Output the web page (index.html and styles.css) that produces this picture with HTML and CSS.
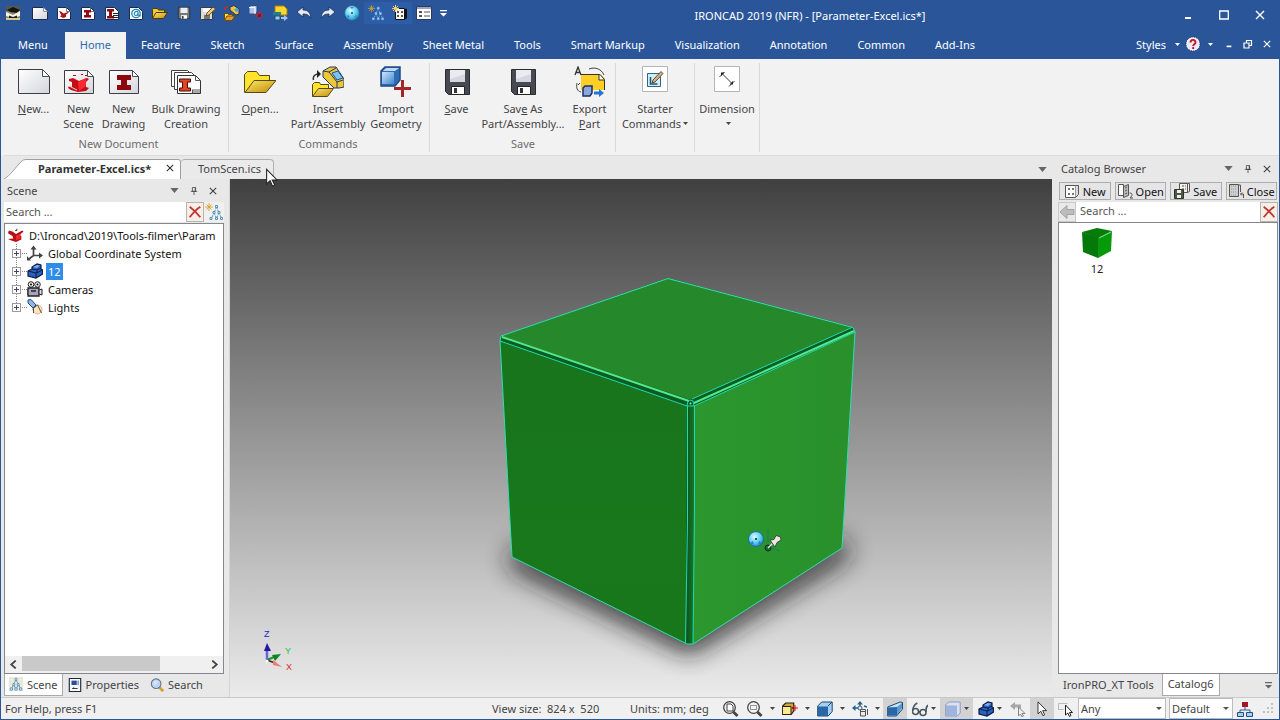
FILE: index.html
```html
<!DOCTYPE html>
<html lang="en">
<head>
<meta charset="utf-8">
<title>IRONCAD 2019 (NFR) - [Parameter-Excel.ics*]</title>
<link rel="stylesheet" href="styles.css">
</head>
<body>
<svg class="defs" aria-hidden="true">
  <defs>
    <linearGradient id="gPage" x1="0" y1="0" x2="1" y2="1"><stop offset="0" stop-color="#fff"/><stop offset="1" stop-color="#d4d5dc"/></linearGradient>
    <linearGradient id="gGold" x1="0" y1="0" x2="1" y2="1"><stop offset="0" stop-color="#ffe95a"/><stop offset="1" stop-color="#c08a1a"/></linearGradient>
    <linearGradient id="gBlue" x1="0" y1="0" x2="1" y2="1"><stop offset="0" stop-color="#cfe6fb"/><stop offset="1" stop-color="#3f86cf"/></linearGradient>
    <radialGradient id="gBall" cx=".4" cy=".35" r=".7"><stop offset="0" stop-color="#d9fbff"/><stop offset=".6" stop-color="#55cbee"/><stop offset="1" stop-color="#2887bd"/></radialGradient>
  </defs>
  <symbol id="i-app" viewBox="0 0 16 16"><rect x="1" y="1" width="14" height="14" fill="#8b8878"/><path d="M1 1h14v5H1z" fill="#55574e"/><path d="M2 5l6-3 7 3-3 3-7-1z" fill="#16160f"/><path d="M1 7l7 3 7-4v5l-7 2-7-2z" fill="#f6f4e6"/><path d="M4 10.500l4 1.500 4-1.500V13H4z" fill="#222"/><path d="M1 13h14v2H1z" fill="#d8c98c"/></symbol>
  <symbol id="i-page" viewBox="0 0 16 16"><path d="M.5 2.500h11l4 4v8h-15z" fill="url(#gPage)" stroke="#1b2b50"/><path d="M11.500 2.500v4h4" fill="#fff" stroke="#8a93a8"/></symbol>
  <symbol id="i-page-scene" viewBox="0 0 16 16"><path d="M1.500 2.500h9l4 4v8h-13z" fill="#fff" stroke="#1b2b50"/><path d="M10.500 2.500v4h4" fill="none" stroke="#777"/><path d="M3 6l2 .5 2.500 2L12 7l1 .5-3 2V12l-3 1-3.500-2 2-.5z" fill="#b01017"/></symbol>
  <symbol id="i-page-draw" viewBox="0 0 16 16"><path d="M1.500 2.500h9l4 4v8h-13z" fill="#fff" stroke="#1b2b50"/><path d="M10.500 2.500v4h4" fill="none" stroke="#777"/><path d="M4 5h7v2.500H9v2.500h2v2.500H4V10h2V7.500H4z" fill="#8e0d14"/></symbol>
  <symbol id="i-page-bulk" viewBox="0 0 16 16"><path d="M1.500 2.500h9l4 4v8h-13z" fill="#fff" stroke="#1b2b50"/><path d="M3 4h7v2.500H8v4.500h2v2.500H3V11h2V6.500H3z" fill="#8e0d14"/><path d="M9 8.500h6M9 10.500h6M9 12.500h6" stroke="#222"/></symbol>
  <symbol id="i-page-at" viewBox="0 0 16 16"><path d="M1.500 2.500h9l4 4v8h-13z" fill="#fff" stroke="#1b2b50"/><circle cx="8" cy="8.500" r="4.200" fill="none" stroke="#2488b4" stroke-width="1.300"/><path d="M10 6.500c-4-1-5 4-2 4 2 0 2-3 2-4v3.500l3 1" fill="none" stroke="#2488b4" stroke-width="1.200"/></symbol>
  <symbol id="i-folder" viewBox="0 0 16 16"><path d="M.5 13.500V4.500l1-1h4l1 1.500h6v2" fill="#f5c93a" stroke="#4d3c08"/><path d="M.5 13.500l3.500-6h11.500l-4 6z" fill="url(#gGold)" stroke="#4d3c08"/></symbol>
  <symbol id="i-floppy" viewBox="0 0 16 16"><path d="M1.500 1.500h13v13h-12l-1-1z" fill="#75777c" stroke="#2d2f35"/><path d="M4 2h8v6H4z" fill="#eceef2"/><path d="M4.500 10.500h7v4h-7z" fill="#fff"/><path d="M5.500 11.500h2v3h-2z" fill="#333"/></symbol>
  <symbol id="i-floppy-pen" viewBox="0 0 16 16"><path d="M.5 2.500h12v12H1.500l-1-1z" fill="#d8dade" stroke="#3a3c42"/><path d="M3 3h7v4H3z" fill="#fff"/><path d="M4 10h6v4H4z" fill="#777"/><path d="M6 11l1-3 6-6 2.500 2-6.500 6z" fill="#f4c77a" stroke="#4f3a16" stroke-width=".8"/></symbol>
  <symbol id="i-insert" viewBox="0 0 16 16"><path d="M6 2l4-1.500 5 3.500v5l-3 1-6-5z" fill="#f0c53c" stroke="#26375a"/><path d="M10 4l3-1 2 3-3 1z" fill="#4da0e8"/><path d="M.5 15.500V8.500h3l1 1h4v2" fill="#ffe24a" stroke="#6b4c0a"/><path d="M.5 15.500l2.500-4.500h8l-3 4.500z" fill="#eb9a32" stroke="#6b4c0a"/><path d="M1 5c0-2 1-3 3-3" fill="none" stroke="#d22" stroke-width="1.500"/></symbol>
  <symbol id="i-import" viewBox="0 0 16 16"><path d="M1 2l2-1.500h6V7L7.500 9H1z" fill="#a9c5ec" stroke="#2f4c86"/><path d="M1 2.500h6V9" fill="none" stroke="#fff"/><path d="M11.500 6v9M7 10.500h9" stroke="#d21d2a" stroke-width="1.800" stroke-dasharray="3 1"/><path d="M10 9h3v3h-3z" fill="#8d1020"/></symbol>
  <symbol id="i-export" viewBox="0 0 16 16"><path d="M3 1h9l3 3v6H3z" fill="#ffd62b" stroke="#a87f11"/><path d="M1 7h8v3H1z" fill="#1c7e99"/><path d="M3 11h5v4H3z" fill="#9fd0e0" stroke="#214c77"/><path d="M9 12h3v-2l4 3-4 3v-2H9z" fill="#a7c3ea"/></symbol>
  <symbol id="i-undo" viewBox="0 0 16 16"><path d="M7 2L1 7l6 5V9c4 0 6 1 7.500 4.500C15 8 12 5 7 5z" fill="#e7e9ef" stroke="#15305f" stroke-width=".8"/></symbol>
  <symbol id="i-redo" viewBox="0 0 16 16"><path d="M9 2l6 5-6 5V9c-4 0-6 1-7.500 4.500C1 8 4 5 9 5z" fill="#e7e9ef" stroke="#15305f" stroke-width=".8"/></symbol>
  <symbol id="i-ball" viewBox="0 0 16 16"><circle cx="8" cy="8" r="7.400" fill="url(#gBall)" stroke="#2b5f90" stroke-width=".8"/><path d="M8 7v2M7 8h2" stroke="#13567f"/><path d="M2.500 11l2-1 1 2-1 1.500M13.500 11l-2-1-1 2 1 1.500M6 2h4L8 4z" fill="#2f8fd3"/></symbol>
  <symbol id="i-tree" viewBox="0 0 18 18"><path d="M11.500 4l-2.500 6-2.500 5M11.500 4l2.500 6 2.500 5M9 10l2.500 5M14 10l-2.500 5" stroke="currentColor" fill="none" stroke-dasharray="2 1"/><g fill="#e6f0f4" stroke="currentColor"><path d="M10.500 2.500h2v2h-2zM8 8.500h2v2H8zM13 8.500h2v2h-2zM5 14.500h2v2H5zM10.500 14.500h2v2h-2zM15.500 14.500h2v2h-2z"/></g><path d="M4 0v8M0 4h8M1.500 1.500l5 5M6.500 1.500l-5 5" stroke="#d8a32c" stroke-width=".9"/></symbol>
  <symbol id="i-tree-plain" viewBox="0 0 16 16"><path d="M0 0h16v16H0z" fill="#e9e9dc"/><path d="M8 3L2.500 14M8 3l5.500 11M5.500 9l2.500 5M10.500 9L8 14" stroke="#5d97bd" fill="none"/><path d="M7 1.500h2v2.500H7zM4.500 7.500h2v2.500h-2zM9.500 7.500h2v2.500h-2zM1.500 12.500h2.500v2.500H1.500zM6.750 12.500h2.500v2.500h-2.500zM12 12.500h2.500v2.500H12z" fill="#fff" stroke="#5590b6"/></symbol>
  <symbol id="i-cat-new" viewBox="0 0 16 16"><path d="M3.500 3.500h9v11h-9z" fill="#f6f6f6" stroke="#111"/><path d="M12 4h3v9l-3 2z" fill="#111"/><path d="M5 6h2v2H5zM9 6h2v2H9zM5 10h2v2H5zM9 10h2v2H9z" fill="#555"/><path d="M3.500 0v7M0 3.500h7M1 1l5 5M6 1L1 6" stroke="#f3cf63"/></symbol>
  <symbol id="i-list" viewBox="0 0 16 16"><path d="M.5 1.500h15v13H.5z" fill="#fff" stroke="#2a3c66"/><path d="M1 2h14v2H1z" fill="#9aa4bb"/><path d="M3 6h3v2H3zM3 10h3v2H3z" fill="#555"/><path d="M8 7h6M8 11h6" stroke="#555"/></symbol>
  <symbol id="b-page" viewBox="0 0 32 32"><path d="M.5 3.500h24l7 7v17H.5z" fill="url(#gPage)" stroke="#3c3e44"/><path d="M24.500 3.500v7h7z" fill="#fff" stroke="#4a4c52"/></symbol>
  <symbol id="b-scene" viewBox="0 0 32 32"><path d="M1.500 4.500h23l6 6v17h-29z" fill="url(#gPage)" stroke="#3c3e44"/><path d="M24.500 4.500v6h6z" fill="#fff" stroke="#4a4c52"/><path d="M6 13l4-1 6 3 8-3 2 1-3 3v5l3 1-3 3-8 1-7-2-3-2 1-2 3 1v-5l-3-1z" fill="#c60d16"/><path d="M15 16l8-4v8l-7 5z" fill="#fa2a2e"/><path d="M10 9.500h3M18 8.500h2M22 9.500h2" stroke="#b20d15"/><path d="M6 20l8 4" stroke="#fff" stroke-width=".8"/></symbol>
  <symbol id="b-draw" viewBox="0 0 32 32"><path d="M1.500 4.500h23l6 6v17h-29z" fill="url(#gPage)" stroke="#3c3e44"/><path d="M24.500 4.500v6h6z" fill="#fff" stroke="#4a4c52"/><path d="M9 9h14v5h-4v5h4v5H9v-5h4v-5H9z" fill="#8c0710"/></symbol>
  <symbol id="b-bulk" viewBox="0 0 32 32"><path d="M1.500 4.500h16l4 4v12h-20z" fill="#fff" stroke="#444"/><path d="M4.500 6.500h17l4 4v13h-21z" fill="#fff" stroke="#444"/><path d="M7.500 9.500h18l5 5v13h-23z" fill="#fff" stroke="#333"/><path d="M25.500 9.500v5h5M23 24h7M23 26h7M22.500 23.500v4" fill="none" stroke="#555"/><path d="M9.500 13h11v3h-3v6h3v3h-11v-3h3v-6h-3z" fill="#e8431f" stroke="#3c0e07"/></symbol>
  <symbol id="b-open" viewBox="0 0 32 32"><path d="M.5 26.500v-18l3-3h9l3 4h10v6" fill="#ffe32e" stroke="#544a12"/><path d="M1 26.500l9-12h22l-10 12z" fill="url(#gGold)" stroke="#544a12"/></symbol>
  <symbol id="b-insert" viewBox="0 0 32 32"><path d="M11 5l7-4h6l8 12v8l-5 1h-5L11 11z" fill="#ecc838" stroke="#26375a"/><path d="M11 5l6 1 8 10v6M17 6l7-4M25 16l6-2" fill="none" stroke="#26375a"/><path d="M20 7l6-2 5 7-6 2z" fill="#79c3f5" stroke="#1c54a3"/><path d="M.5 30.500V18.500l2-2h5l1 2h8v4" fill="#ffe32e" stroke="#544a12"/><path d="M.5 30.500l6-8h15l-6 8z" fill="url(#gGold)" stroke="#544a12"/><path d="M1.500 14c-1-4 2-6 5-6" fill="none" stroke="#333" stroke-width="1.500"/><path d="M5 4l4 4-4 4z" fill="#222"/></symbol>
  <symbol id="b-import" viewBox="0 0 32 32"><path d="M1 5l4-4h15v13l-5 6H1z" fill="#2f6cb6" stroke="#224a83" stroke-width="1.500"/><path d="M2 6h12v12H2z" fill="url(#gBlue)"/><path d="M6 2h13l-4 3H3z" fill="#bcdcf5"/><path d="M22.500 14v17M14 22.500h17" stroke="#a3262b" stroke-width="3"/></symbol>
  <symbol id="b-floppy" viewBox="0 0 32 32"><path d="M4.500 3.500h24v25H7.500l-3-3z" fill="#484a51" stroke="#292b31"/><path d="M9 4h15v12H9z" fill="#e9ebf0"/><path d="M9 13l15-5v8H9z" fill="#d4d7df"/><path d="M10.500 20.500h13v8h-13z" fill="#fff" stroke="#222"/><path d="M13 22h3v5h-3z" fill="#333"/></symbol>
  <symbol id="b-export" viewBox="0 0 32 32"><path d="M7 8h19l5 5v11H7z" fill="#ffcf25"/><path d="M7 8.500h19l4.500 5V24" fill="none" stroke="#333"/><path d="M25 8.500v5.500h5" fill="#fff" stroke="#333"/><path d="M1 9l3-8 3 8M2 6.500h4" fill="none" stroke="#333" stroke-width="1.300"/><path d="M15 3c5-2 12-1 15 6M3 17c-1 5 0 8 4 9M6 17l-2 2" fill="none" stroke="#444"/><path d="M9 22l2-2h7v7l-2 3H9z" fill="#8ca8d8" stroke="#1c2f66" stroke-width="1.500"/><path d="M20 25.500h5v-2.500l5 4-5 4v-2.500h-5z" fill="#2175d6"/></symbol>
  <symbol id="b-starter" viewBox="0 0 26 26"><path d="M.5.5h25v25H.5z" fill="#fff" stroke="#b4b4b4"/><path d="M5.500 7.500h13v13h-13z" fill="#d3edf3" stroke="#2a6684"/><path d="M8.500 11v7h7" fill="none" stroke="#1c5678" stroke-width="1.500"/><path d="M10 17l1-3 8-8.500 2 2-8 8.500z" fill="#d2b48a" stroke="#5a4a38"/></symbol>
  <symbol id="b-dim" viewBox="0 0 26 26"><path d="M.5.500h25v25H.5z" fill="#fff" stroke="#b4b4b4"/><path d="M8 7.500l10 10M5.500 11l5-5M15 20.500l5.500-5.500" stroke="#333" fill="none"/><path d="M7 6.500h3.500L7 10zM19 18.500h-3.500L19 15z" fill="#222"/></symbol>
  <symbol id="i-help" viewBox="0 0 16 16"><circle cx="8" cy="8" r="7" fill="#fff" stroke="#1b2a60" stroke-dasharray="1 1"/><circle cx="8" cy="8" r="6" fill="#eceafa"/><path d="M5.500 6.500c0-3.500 5-3.500 5 0 0 1.800-2.300 1.700-2.300 3.500M8.200 11v2" fill="none" stroke="#c81621" stroke-width="1.900"/></symbol>
  <symbol id="i-x" viewBox="0 0 10 10"><path d="M1 1l8 8M9 1L1 9" stroke="currentColor" stroke-width="1.400" fill="none"/></symbol>
  <symbol id="i-min" viewBox="0 0 10 10"><path d="M2 8h6" stroke="currentColor" stroke-width="2"/></symbol>
  <symbol id="i-max" viewBox="0 0 10 10"><path d="M.7 1h8.600v8H.7z" fill="none" stroke="currentColor" stroke-width="1.300"/></symbol>
  <symbol id="i-restore" viewBox="0 0 10 10"><path d="M3.500 4V1.500h5v5H6" fill="none" stroke="currentColor" stroke-width="1.200"/><path d="M1 4h5v5H1z" fill="none" stroke="currentColor" stroke-width="1.200"/></symbol>
  <symbol id="i-pin" viewBox="0 0 10 10"><path d="M3 .5h4v5H3zM1 5.500h8M5 6v4M6.500.5v5" fill="none" stroke="currentColor"/></symbol>
  <symbol id="i-caret" viewBox="0 0 10 6"><path d="M0 0h10L5 6z" fill="currentColor"/></symbol>
  <symbol id="i-caretbar" viewBox="0 0 8 8"><path d="M0 0h8v1.500H0zM0 3.500h8L4 7.500z" fill="currentColor"/></symbol>
  <symbol id="i-redx" viewBox="0 0 18 18"><path d="M3 3c4 3 9 8 12 12M15 3C10 6 6 11 3 15" stroke="#c3352f" stroke-width="2" fill="none"/></symbol>
  <symbol id="i-scene-red" viewBox="0 0 18 16"><path d="M1 3l4 1 4 3 7-4 1.500 1-4.500 4 2 1v4l-6 3-6-2-3-1.500 6-.5-1-3-5-3z" fill="#b70d14"/><path d="M9 8.500l5-1.500v5l-5 2z" fill="#f2262b"/><path d="M8 3h2V1" stroke="#222" fill="none"/></symbol>
  <symbol id="i-axes" viewBox="0 0 16 16"><path d="M6.500 10.500V2M6.500 10.500H14M6.500 10.500L2 14" stroke="#444" stroke-width="1.700" fill="none"/><path d="M3.500 4.500l3-4 3 4zM12 7.500l4 3-4 3zM0 11v4.500h4z" fill="#444"/></symbol>
  <symbol id="i-bluepart" viewBox="0 0 16 16"><path d="M1 8l4-2V4l5-3 4 1v4l1.500 1v4L9 15l-8-2z" fill="#2a61c0" stroke="#0c1b46" stroke-width="1.200"/><path d="M5 6l5 1 4-2M10 7v3l5-3M1 8l8 2v5M9 10l2-1" fill="none" stroke="#0c1b46"/><path d="M6 4l4-2 3 .5L10 5z" fill="#7fb0ee"/></symbol>
  <symbol id="i-camera" viewBox="0 0 16 16"><g fill="#eee" stroke="#222"><circle cx="4" cy="3.500" r="2.800"/><circle cx="10.500" cy="3.500" r="2.800"/></g><circle cx="4" cy="3.500" r="1"/><circle cx="10.500" cy="3.500" r="1"/><path d="M1 7h11v8H1z" fill="#a9a4bd" stroke="#222" stroke-width="1.300"/><path d="M12 9l3-1v6l-3-1zM0 8v6" fill="#ddd" stroke="#222"/><path d="M4 9h5v2H4z" fill="#444"/></symbol>
  <symbol id="i-light" viewBox="0 0 16 16"><circle cx="10.500" cy="10.500" r="4.500" fill="#fde5bd" stroke="#e2b37b"/><path d="M1 1l3-.5 5 5.500-3 3-5-5z" fill="#8eb7e6" stroke="#234b82"/><path d="M5.500 10l5-4 4 8M6.500 8v6" fill="none" stroke="#574d55"/></symbol>
  <symbol id="i-props" viewBox="0 0 16 16"><path d="M1.500.5h13v15h-13z" fill="#f7f8fc" stroke="#23293f" stroke-width="1.300"/><path d="M4 3h6v5H4z" fill="#2d4f9a"/><path d="M11.500 3v5" stroke="#2d4f9a"/><path d="M5 12h6M5 12l2-1" stroke="#222" fill="none"/></symbol>
  <symbol id="i-search" viewBox="0 0 16 16"><path d="M10 10l5 5" stroke="#d7a02f" stroke-width="3.200"/><circle cx="7" cy="6.500" r="5.500" fill="#b8d6f4" stroke="#6a7485" stroke-width="1.300"/><path d="M4 6l3-3M5 8l4-4" stroke="#fff"/></symbol>
  <symbol id="c-new" viewBox="0 0 16 16"><path d="M1.500 2.500h10v12h-10z" fill="#fbfbf7" stroke="#555"/><path d="M11.500 2.500h3v9l-3 3" fill="#ddd" stroke="#555"/><path d="M4 5h2v2H4zM8 5h2v2H8zM4 10h2v2H4zM8 10h2v2H8z" fill="#777"/></symbol>
  <symbol id="c-open" viewBox="0 0 16 16"><path d="M1.500 1.500h5v11h-5z" fill="#fbfbf7" stroke="#555"/><path d="M6.500 3.500l5-2v11l-5 2z" fill="#bbb" stroke="#555"/><path d="M8 5l2-1M8 8l2-1M8 11l2-1" stroke="#555"/><path d="M12.500 10c3.500-.5 3 3 .5 5h3" fill="none" stroke="#555"/></symbol>
  <symbol id="c-save" viewBox="0 0 16 16"><path d="M5.500.5h8v9h-8zM13.500.5h2v8l-2 1" fill="#f1f1ea" stroke="#555"/><path d="M8 3h2M11 3h1M8 6h2M11 6h1" stroke="#555"/><path d="M.5 6.500h9v9h-9z" fill="#4e5648" stroke="#2f3529"/><path d="M3 7h4v3H3zM3 12h4v3H3z" fill="#f2f2ec"/></symbol>
  <symbol id="c-close" viewBox="0 0 16 16"><path d="M1.500 1.500h9v12h-9z" fill="#cfcfcf" stroke="#555"/><path d="M3 3h6M3 6h6M3 9h6M3 12h6" stroke="#999" stroke-dasharray="1 1"/><path d="M10.500 2h2v7M15.500 15v-4h-3l1.500-1.500M12.500 11l1.500 1.500" fill="none" stroke="#555"/></symbol>
  <symbol id="i-back" viewBox="0 0 16 16"><path d="M8 1.500v4h7v5H8v4L1 8z" fill="#bdbdbd" stroke="#a3a3a3"/></symbol>
  <symbol id="i-cube" viewBox="0 0 32 32"><path d="M1 5L16 1l15 3-13 8z" fill="#087b0b"/><path d="M1 5l17 6-1 20L2 25z" fill="#04780a"/><path d="M17 11l14-7-1 20-13 7z" fill="#069a0b"/><path d="M18 11l12-6" stroke="#79d77b" stroke-width="1.200"/></symbol>
  <symbol id="s-zoompage" viewBox="0 0 16 16"><circle cx="6.500" cy="6.500" r="5.800" fill="#f4f4f4" stroke="#444" stroke-width="1.300"/><path d="M4 3h4l2 2v5H4z" fill="#fff" stroke="#444"/><path d="M10.500 11l4 4" stroke="#444" stroke-width="2.800"/></symbol>
  <symbol id="s-zoomwin" viewBox="0 0 16 16"><circle cx="6.500" cy="6.500" r="5.800" fill="#f4f4f4" stroke="#444" stroke-width="1.300"/><path d="M3.500 4.500h6v4h-6z" fill="none" stroke="#333" stroke-dasharray="1 1"/><path d="M10.500 11l4 4" stroke="#444" stroke-width="2.800"/></symbol>
  <symbol id="s-yellow" viewBox="0 0 16 16"><path d="M.7 5l3-3h8v8l-2.500 3.500H.7z" fill="#cfa93a" stroke="#222" stroke-width="1.200"/><path d="M1 5.500h8v7.500H1z" fill="#ffe98a"/><path d="M1 5.500h8V13" fill="none" stroke="#222"/><path d="M10 7h6M13 4v6M10 7l2-2M10 7l2 2" stroke="#c11" fill="none"/></symbol>
  <symbol id="s-bluecube" viewBox="0 0 16 16"><path d="M.7 5l4-4h10.500v9.500l-4 4.500H.7z" fill="#a5d0f2" stroke="#1d4672"/><path d="M1 5.500h10V15H1z" fill="#2a67a6"/><path d="M11 5l4-4" stroke="#1d4672"/></symbol>
  <symbol id="s-pan" viewBox="0 0 16 16"><path d="M0 7l3.500-3v6zM8 0l3 3.500H5z" fill="#27628b"/><path d="M3 7h3M8 3v2M12 5l3 1" stroke="#27628b" stroke-width="1.500"/><circle cx="8" cy="7" r="2" fill="none" stroke="#27628b"/><path d="M8.500 8.500h5v6.500h-5zM8.500 10.500h5M15.500 8v6" fill="#ececec" stroke="#555"/></symbol>
  <symbol id="s-persp" viewBox="0 0 16 16"><path d="M.7 6L13 1l2.500.5V8l-6 7H.7z" fill="#c4e2f7" stroke="#1d4672"/><path d="M1 6.500l9-.5v8.500H1z" fill="#2a67a6"/><path d="M10 6l5-4v5l-5 7z" fill="#5a9ad0"/></symbol>
  <symbol id="s-glasses" viewBox="0 0 16 16"><circle cx="3.500" cy="10.500" r="3" fill="none" stroke="#47555f" stroke-width="1.500"/><circle cx="11" cy="11.500" r="3" fill="none" stroke="#47555f" stroke-width="1.500"/><path d="M.8 9.500c0-4 2-6 4.500-7.500M14 11c0-4 0-5 2-7M6.500 10.500l1.500.5" fill="none" stroke="#47555f" stroke-width="1.500"/></symbol>
  <symbol id="s-palecube" viewBox="0 0 16 16"><path d="M.7 4l3-3h11.500v11l-3 3H.7z" fill="#d8e2f2" stroke="#8b9bc0"/><path d="M1 4.500h11V15H1z" fill="#9fb4dd"/></symbol>
  <symbol id="s-graycur" viewBox="0 0 16 16"><path d="M0 5l5-4v2.500h6V8H9V6.500H5V9z" fill="#a7a7a7"/><path d="M8.500 6v9l2-2 1.500 3 1.500-1-1.500-2.500H15z" fill="#eee" stroke="#888"/></symbol>
  <symbol id="s-cursor" viewBox="0 0 12 18"><path d="M1.500 1v13.500l3.200-3 2.300 5 2-1-2.300-4.700h4.400z" fill="#fff" stroke="#222"/></symbol>
  <symbol id="s-rectcur" viewBox="0 0 16 16"><path d="M.5 9V2.500h9M.5 8.500h5" fill="none" stroke="#bbb"/><path d="M7.500 4v10l2.300-2 1.700 3.500 1.500-1-1.500-3h3z" fill="#fff" stroke="#222"/></symbol>
  <symbol id="s-org" viewBox="0 0 16 16"><path d="M5 1h6v5H5z" fill="#a5142a"/><path d="M8 6v3M3 11V9h10v2" fill="none" stroke="#355a8f"/><path d="M.5 11.500h6v4h-6zM9.500 11.500h6v4h-6z" fill="#a8cfef" stroke="#23507f"/></symbol>
  <symbol id="s-grip" viewBox="0 0 12 12"><path d="M9 0h2v2H9zM5 4h2v2H5zM9 4h2v2H9zM1 8h2v2H1zM5 8h2v2H5zM9 8h2v2H9z" fill="#c2c2c2"/></symbol>
</svg>

<div class="app">
  <header class="titlebar">
    <div class="qat">
      <svg class="ic appicon"><use href="#i-app"/></svg>
      <button class="qb" aria-label="New"><svg class="ic"><use href="#i-page"/></svg></button>
      <button class="qb" aria-label="New scene"><svg class="ic"><use href="#i-page-scene"/></svg></button>
      <button class="qb" aria-label="New drawing"><svg class="ic"><use href="#i-page-draw"/></svg></button>
      <button class="qb" aria-label="Bulk drawing"><svg class="ic"><use href="#i-page-bulk"/></svg></button>
      <button class="qb" aria-label="Web page"><svg class="ic"><use href="#i-page-at"/></svg></button>
      <button class="qb" aria-label="Open"><svg class="ic"><use href="#i-folder"/></svg></button>
      <button class="qb" aria-label="Save"><svg class="ic small"><use href="#i-floppy"/></svg></button>
      <button class="qb" aria-label="Save as"><svg class="ic"><use href="#i-floppy-pen"/></svg></button>
      <button class="qb" aria-label="Insert part"><svg class="ic"><use href="#i-insert"/></svg></button>
      <button class="qb" aria-label="Import geometry"><svg class="ic"><use href="#i-import"/></svg></button>
      <button class="qb" aria-label="Export part"><svg class="ic"><use href="#i-export"/></svg></button>
      <button class="qb" aria-label="Undo"><svg class="ic"><use href="#i-undo"/></svg></button>
      <button class="qb" aria-label="Redo"><svg class="ic"><use href="#i-redo"/></svg></button>
      <button class="qb" aria-label="TriBall"><svg class="ic"><use href="#i-ball"/></svg></button>
      <button class="qb lit" aria-label="Scene browser"><svg class="ic sky"><use href="#i-tree"/></svg></button>
      <button class="qb lit" aria-label="Catalog browser"><svg class="ic"><use href="#i-cat-new"/></svg></button>
      <button class="qb" aria-label="Properties"><svg class="ic"><use href="#i-list"/></svg></button>
      <button class="qb narrow" aria-label="Customize"><svg class="ic caretbar"><use href="#i-caretbar"/></svg></button>
    </div>
    <div class="title">IRONCAD 2019 (NFR) - [Parameter-Excel.ics*]</div>
    <div class="winbtns">
      <button aria-label="Minimize"><svg class="ic glyph"><use href="#i-min"/></svg></button>
      <button aria-label="Maximize"><svg class="ic glyph"><use href="#i-max"/></svg></button>
      <button aria-label="Close"><svg class="ic glyph"><use href="#i-x"/></svg></button>
    </div>
  </header>

  <nav class="menubar">
    <button class="mtab">Menu</button>
    <button class="mtab active">Home</button>
    <button class="mtab">Feature</button>
    <button class="mtab">Sketch</button>
    <button class="mtab">Surface</button>
    <button class="mtab">Assembly</button>
    <button class="mtab">Sheet Metal</button>
    <button class="mtab">Tools</button>
    <button class="mtab">Smart Markup</button>
    <button class="mtab">Visualization</button>
    <button class="mtab">Annotation</button>
    <button class="mtab">Common</button>
    <button class="mtab">Add-Ins</button>
    <div class="menuend">
      <button class="styles">Styles <svg class="ic dd"><use href="#i-caret"/></svg></button>
      <button aria-label="Help"><svg class="ic help"><use href="#i-help"/></svg></button>
      <button class="hcaret" aria-label="Help menu"><svg class="ic dd"><use href="#i-caret"/></svg></button>
      <button class="mdi" aria-label="Minimize document"><svg class="ic mini"><use href="#i-min"/></svg></button>
      <button class="mdi" aria-label="Restore document"><svg class="ic glyph"><use href="#i-restore"/></svg></button>
      <button class="mdi" aria-label="Close document"><svg class="ic mini"><use href="#i-x"/></svg></button>
    </div>
  </nav>

  <section class="ribbon">
    <div class="group g-new">
      <div class="cmds">
        <button class="cmd w45"><svg class="big"><use href="#b-page"/></svg><span><u>N</u>ew...</span></button>
        <button class="cmd w45"><svg class="big"><use href="#b-scene"/></svg><span>New<br>Scene</span></button>
        <button class="cmd w45"><svg class="big"><use href="#b-draw"/></svg><span>New<br>Drawing</span></button>
        <button class="cmd w80"><svg class="big"><use href="#b-bulk"/></svg><span>Bulk Drawing<br>Creation</span></button>
      </div>
      <div class="caption">New Document</div>
    </div>
    <div class="group g-cmd">
      <div class="cmds">
        <button class="cmd w56"><svg class="big"><use href="#b-open"/></svg><span><u>O</u>pen...</span></button>
        <button class="cmd w80"><svg class="big"><use href="#b-insert"/></svg><span>Insert<br>Part/Assembly</span></button>
        <button class="cmd w56"><svg class="big"><use href="#b-import"/></svg><span>Import<br>Geometry</span></button>
      </div>
      <div class="caption">Commands</div>
    </div>
    <div class="group g-save">
      <div class="cmds">
        <button class="cmd w45"><svg class="big"><use href="#b-floppy"/></svg><span><u>S</u>ave</span></button>
        <button class="cmd w88"><svg class="big"><use href="#b-floppy"/></svg><span>Sav<u>e</u> As<br>Part/Assembly...</span></button>
        <button class="cmd w45"><svg class="big"><use href="#b-export"/></svg><span>Export<br><u>P</u>art</span></button>
      </div>
      <div class="caption">Save</div>
    </div>
    <div class="group g-start">
      <div class="cmds">
        <button class="cmd"><svg class="boxed"><use href="#b-starter"/></svg><span>Starter<br>Commands<svg class="ic dd"><use href="#i-caret"/></svg></span></button>
      </div>
    </div>
    <div class="group g-dim">
      <div class="cmds">
        <button class="cmd"><svg class="boxed"><use href="#b-dim"/></svg><span>Dimension<br><svg class="ic dd"><use href="#i-caret"/></svg></span></button>
      </div>
    </div>
  </section>

  <main class="work">
    <div class="docs">
      <div class="doctabs">
        <div class="doctab current">
          <svg class="tabshape" viewBox="0 0 177 21" preserveAspectRatio="none"><path d="M0 21C6 18 12 8 17 3 19 1 20 .5 23 .5H174Q176.500.5 176.500 3V21" fill="#fff" stroke="#9b9b9b"/></svg>
          <button class="tabname">Parameter-Excel.ics*</button>
          <button class="tabclose" aria-label="Close tab"><svg class="ic mini"><use href="#i-x"/></svg></button>
        </div>
        <button class="doctab other">TomScen.ics</button>
        <button class="tablist" aria-label="Document list"><svg class="ic arrow"><use href="#i-caret"/></svg></button>
        <svg class="pointer"><use href="#s-cursor"/></svg>
      </div>
      <div class="docbody">
        <aside class="panel scene">
          <div class="phead"><span>Scene</span>
            <button aria-label="Scene menu"><svg class="ic arrow"><use href="#i-caret"/></svg></button>
            <button aria-label="Pin scene"><svg class="ic mini"><use href="#i-pin"/></svg></button>
            <button aria-label="Close scene"><svg class="ic mini"><use href="#i-x"/></svg></button>
          </div>
          <div class="srow">
            <input type="text" placeholder="Search ..." aria-label="Search scene">
            <button class="clear" aria-label="Clear search"><svg class="ic"><use href="#i-redx"/></svg></button>
            <button class="treebtn" aria-label="Tree options"><svg class="ic steel"><use href="#i-tree"/></svg></button>
          </div>
          <div class="treebox">
            <ul class="tree">
              <li class="root"><svg class="ic"><use href="#i-scene-red"/></svg><span>D:\Ironcad\2019\Tools-filmer\Param</span></li>
              <li><button class="plus" aria-label="Expand"></button><svg class="ic"><use href="#i-axes"/></svg><span>Global Coordinate System</span></li>
              <li><button class="plus" aria-label="Expand"></button><svg class="ic"><use href="#i-bluepart"/></svg><span class="sel">12</span></li>
              <li><button class="plus" aria-label="Expand"></button><svg class="ic"><use href="#i-camera"/></svg><span>Cameras</span></li>
              <li><button class="plus" aria-label="Expand"></button><svg class="ic"><use href="#i-light"/></svg><span>Lights</span></li>
            </ul>
            <div class="hscroll">
              <button aria-label="Scroll left"><svg viewBox="0 0 8 8"><path d="M6 .5L2 4l4 3.500" fill="none" stroke="#444" stroke-width="1.600"/></svg></button>
              <div class="track"><div class="thumb"></div></div>
              <button aria-label="Scroll right"><svg viewBox="0 0 8 8"><path d="M2 .5L6 4 2 7.500" fill="none" stroke="#444" stroke-width="1.600"/></svg></button>
            </div>
          </div>
          <div class="btabs">
            <button class="btab on"><svg class="ic"><use href="#i-tree-plain"/></svg>Scene</button>
            <button class="btab"><svg class="ic"><use href="#i-props"/></svg>Properties</button>
            <button class="btab"><svg class="ic"><use href="#i-search"/></svg>Search</button>
          </div>
        </aside>
        <div class="viewport">
          <svg class="model" viewBox="230 179 822 518" role="img" aria-label="Green cube with rounded edges">
            <defs>
              <filter id="soft" x="-20%" y="-60%" width="140%" height="220%"><feGaussianBlur stdDeviation="13"/></filter>
              <linearGradient id="gLeft" x1="0" y1="0" x2="0" y2="1"><stop offset="0" stop-color="#18751c"/><stop offset="1" stop-color="#19771b"/></linearGradient>
              <linearGradient id="gRight" x1="0" y1="0" x2="1" y2="0"><stop offset="0" stop-color="#2b972d"/><stop offset="1" stop-color="#29902c"/></linearGradient>
              <linearGradient id="gEdge" x1="0" y1="0" x2="1" y2="0"><stop offset="0" stop-color="#0a4f1f"/><stop offset="1" stop-color="#157a25"/></linearGradient>
            </defs>
            <path d="M516 545L682 620 696 620 842 536 850 556 690 654 508 566z" fill="#1c1c1c" opacity=".9" filter="url(#soft)"/>
            <path d="M668 278L853 327 855 332 842 548 693 644 687 644 512 557 500 341 501 336z" fill="#0b5c20"/>
            <path d="M668 278L853 327 693 399 688 399 501 336z" fill="#25892b"/>
            <path d="M500 341L687 406 686 644 512 557z" fill="url(#gLeft)"/>
            <path d="M855 332L694 406 693 644 842 548z" fill="url(#gRight)"/>
            <path d="M687 406h7l-1 238h-7z" fill="url(#gEdge)"/>
            <path d="M502 337L689 401M854 331L694 403" stroke="#54e88c" stroke-width="2" fill="none"/>
            <path d="M668 278.500L853 327.500 855 332 842 548 693 644H687L512 557 500 341 501 336z" fill="none" stroke="#35ddb6"/>
            <path d="M500 341L687 406M855 332L694 406M853 327L692 399M687.500 406V521L685.500 644M694.500 406V510L693 644M687 406l1-5 2-1 3 1 1 5z" fill="none" stroke="#20d8b4"/>
            <circle cx="690.500" cy="403.500" r="1" fill="#7ff5b0"/>
            <circle cx="756" cy="539" r="7.500" fill="url(#gBall)" stroke="#2467a0"/>
            <path d="M756 538v2M755 539h2" stroke="#123"/><path d="M750 543l3-2 1 4zM762 543l-3-2-1 4z" fill="#2a82c9"/>
            <path d="M768 529v13M768 547l12 4" stroke="#157a63" opacity=".8"/>
            <circle cx="768" cy="548" r="3" fill="#17663e" stroke="#112b25"/>
            <path d="M768 548l5-5" stroke="#dfe6e0" stroke-width="1.500"/>
            <path d="M770 540l4-.5 2-4 4.500 1.500.5 3-4 2.500-2 4.500z" fill="#ece9e4" stroke="#333" stroke-width=".8"/>
            <g class="triad">
              <path d="M267 660V649" stroke="#6464dc" stroke-width="2.500"/><path d="M264 651l3-8 4 8z" fill="#201a9e"/>
              <path d="M267 660l7-3" stroke="#1a9630" stroke-width="2"/><path d="M272 655l9-1-6 7z" fill="#128321"/>
              <path d="M267 660l8 3" stroke="#502020" stroke-width="1.500"/><path d="M273 660l9 7-9-2z" fill="#ee7a70"/>
              <circle cx="267" cy="661" r="1.500" fill="#fff"/>
              <text x="264" y="637" fill="#1c1cc8">Z</text><text x="285" y="654" fill="#1fc640">Y</text><text x="286" y="670" fill="#e01f2d">X</text>
            </g>
          </svg>
        </div>
      </div>
    </div>
    <aside class="panel catalog">
      <div class="phead"><span>Catalog Browser</span>
        <button aria-label="Catalog menu"><svg class="ic arrow"><use href="#i-caret"/></svg></button>
        <button aria-label="Pin catalog"><svg class="ic mini"><use href="#i-pin"/></svg></button>
        <button aria-label="Close catalog"><svg class="ic mini"><use href="#i-x"/></svg></button>
      </div>
      <div class="cbtns">
        <button><svg class="ic"><use href="#c-new"/></svg>New</button>
        <button><svg class="ic"><use href="#c-open"/></svg>Open</button>
        <button><svg class="ic"><use href="#c-save"/></svg>Save</button>
        <button><svg class="ic"><use href="#c-close"/></svg>Close</button>
      </div>
      <div class="srow">
        <button class="back" aria-label="Back"><svg class="ic"><use href="#i-back"/></svg></button>
        <input type="text" placeholder="Search ..." aria-label="Search catalog">
        <button class="clear" aria-label="Clear search"><svg class="ic"><use href="#i-redx"/></svg></button>
      </div>
      <div class="items">
        <button class="item"><svg><use href="#i-cube"/></svg><span>12</span></button>
      </div>
      <div class="btabs">
        <button class="btab">IronPRO_XT Tools</button>
        <button class="btab on">Catalog6</button>
        <button class="more" aria-label="More catalogs"><svg class="ic caretbar"><use href="#i-caretbar"/></svg></button>
      </div>
    </aside>
  </main>

  <footer class="status">
    <span class="hint">For Help, press F1</span>
    <span class="vsize">View size:&nbsp; 824 x&nbsp; 520</span>
    <span class="units">Units: mm; deg</span>
    <div class="tools">
      <button aria-label="Zoom fit"><svg class="ic"><use href="#s-zoompage"/></svg></button>
      <button class="split" aria-label="Zoom window"><svg class="ic"><use href="#s-zoomwin"/></svg><svg class="ic dd"><use href="#i-caret"/></svg></button>
      <button class="split" aria-label="Look at"><svg class="ic"><use href="#s-yellow"/></svg><svg class="ic dd"><use href="#i-caret"/></svg></button>
      <button class="split" aria-label="Standard view"><svg class="ic"><use href="#s-bluecube"/></svg><svg class="ic dd"><use href="#i-caret"/></svg></button>
      <button class="split" aria-label="Camera move"><svg class="ic"><use href="#s-pan"/></svg><svg class="ic dd"><use href="#i-caret"/></svg></button>
      <button class="shade" aria-label="Perspective"><svg class="ic"><use href="#s-persp"/></svg></button>
      <button class="split tight" aria-label="Visibility"><svg class="ic"><use href="#s-glasses"/></svg><svg class="ic dd"><use href="#i-caret"/></svg></button>
      <button class="split tight shade" aria-label="Render style"><svg class="ic"><use href="#s-palecube"/></svg><svg class="ic dd"><use href="#i-caret"/></svg></button>
      <button class="split tight" aria-label="Part"><svg class="ic"><use href="#i-bluepart"/></svg><svg class="ic dd"><use href="#i-caret"/></svg></button>
      <button aria-label="Reselect"><svg class="ic"><use href="#s-graycur"/></svg></button>
      <button class="shade" aria-label="Select"><svg class="ic"><use href="#s-cursor"/></svg></button>
      <button aria-label="Box select"><svg class="ic"><use href="#s-rectcur"/></svg></button>
    </div>
    <label class="drop any"><select aria-label="Selection filter"><option>Any</option></select></label>
    <label class="drop def"><select aria-label="Configuration"><option>Default</option></select></label>
    <button class="org" aria-label="Configurations"><svg class="ic"><use href="#s-org"/></svg></button>
    <svg class="grip"><use href="#s-grip"/></svg>
  </footer>
</div>
</body>
</html>
```

FILE: styles.css
```css
* { box-sizing: border-box; }
body {
  margin: 0;
  font: 11px/15px "Noto Sans", "Open Sans", sans-serif;
  color: #444;
}
button, input, select { font: inherit; color: inherit; }
button { background: none; border: 0; padding: 0; margin: 0; display: flex; align-items: center; justify-content: center; white-space: nowrap; }
.defs { position: absolute; width: 0; height: 0; }
.ic { width: 16px; height: 16px; flex: none; display: block; }
.ic.small { width: 14px; height: 14px; }
.ic.glyph { width: 10px; height: 10px; }
.ic.mini { width: 8px; height: 8px; }
.ic.caretbar { width: 7px; height: 7px; }
.ic.arrow { width: 9px; height: 5px; color: #666; }
.ic.dd { width: 5px; height: 3px; }

.app { height: 100vh; display: flex; flex-direction: column; background: #f0f0f1; border: solid #2a5699; border-width: 0 1px 1px; }

.titlebar { display: flex; align-items: center; height: 30px; background: #2a5699; color: #fff; flex: none; }
.qat { display: flex; align-items: center; padding: 0 0 4px 4px; }
.appicon { margin-right: 7px; }
.qb { width: 24px; height: 22px; }
.qb.narrow { width: 14px; }
.qb.lit { background: #2d5da6; }
.sky { color: #69b0e4; }
.ic.steel { width: 18px; height: 18px; color: #5591b8; }
.title { flex: 1; text-align: center; }
.winbtns { display: flex; padding-right: 1px; }
.winbtns button { width: 36px; height: 30px; }

.menubar { display: flex; align-items: flex-end; height: 29px; flex: none; background: #2a5699; color: #fff; padding-left: 2px; }
.mtab { height: 27px; padding: 0 15px 2px; }
.mtab.active { background: #f3f3f4; color: #2a6bb0; margin-left: 2px; }
.menuend { margin-left: auto; display: flex; align-items: center; height: 30px; padding-right: 3px; }
.styles { gap: 9px; margin-right: 5px; }
.help { width: 16px; height: 16px; }
.hcaret { width: 18px; }
.mdi { width: 19px; height: 20px; }

.ribbon { display: flex; height: 97px; flex: none; background: #f2f2f3; margin-left: 3px; border-bottom: 1px solid #dcdcdc; }
.group { display: flex; flex-direction: column; border-right: 1px solid #d9d9da; margin: 4px 0 3px; }
.cmds { display: flex; align-items: flex-start; flex: 1; }
.cmd { flex-direction: column; justify-content: flex-start; text-align: center; }
.cmd span { display: block; margin-top: 3px; }
.big { width: 32px; height: 32px; margin-top: 3px; display: block; }
.boxed { width: 26px; height: 26px; margin: 3px 0 6px; display: block; }
.cmd .dd { display: inline-block; vertical-align: 3px; margin-left: 2px; }
.w45 { width: 45px; }
.w56 { width: 56px; }
.w80 { width: 80px; }
.w88 { width: 88px; }
.caption { text-align: center; color: #6d6d6d; line-height: 16px; }
.g-new { padding: 0 2px 0 7px; }
.g-cmd { padding: 0 5px 0 3px; }
.g-save { padding: 0 3px 0 4px; }
.g-start .cmd { width: 78px; }
.g-dim .cmd { width: 64px; }

.work { flex: 1; display: flex; min-height: 0; background: #e8e8e9; }
.docs { flex: 1; display: flex; flex-direction: column; min-width: 0; }
.doctabs { position: relative; display: flex; align-items: flex-end; height: 23px; flex: none; padding-left: 3px; }
.doctab { height: 20px; }
.doctab.current { position: relative; display: flex; width: 177px; align-items: center; padding: 0 7px 2px 34px; color: #333; }
.tabshape { position: absolute; inset: 0; width: 100%; height: 100%; }
.tabname { position: relative; font-weight: bold; }
.tabclose { position: relative; margin-left: auto; }
.doctab.other { border: 1px solid #b0b0b0; border-bottom: 0; border-left: 0; border-radius: 4px 4px 0 0; padding: 0 12px 2px 17px; background: #eaeaea; }
.tablist { margin-left: auto; height: 20px; padding-right: 5px; }
.pointer { position: absolute; left: 264px; top: 12px; width: 13px; height: 20px; z-index: 2; }
.docbody { flex: 1; display: flex; min-height: 0; }

.panel { display: flex; flex-direction: column; flex: none; min-height: 0; }
.scene { width: 229px; padding: 0 5px 1px 3px; border-right: 1px solid #d4d4d4; }
.catalog { width: 227px; padding: 0 1px 1px 6px; }
.phead { display: flex; align-items: center; height: 23px; gap: 11px; padding: 0 7px 0 3px; flex: none; }
.phead span { margin-right: auto; }
.catalog .phead { height: 25px; }
.srow { display: flex; height: 20px; flex: none; background: #fff; }
.srow input { flex: 1; min-width: 0; border: 0; padding: 0 2px 1px; background: #fff; outline: 0; }
.srow input::placeholder { color: #555; opacity: 1; }
.catalog .srow input { padding: 0 4px 3px; }
.clear { width: 18px; border: 1px solid #b9b3ac; background: #f4efe9; }
.treebtn { width: 20px; background: #f0f0f0; }

.treebox { flex: 1; display: flex; flex-direction: column; min-height: 0; margin-top: 1px; border: 1px solid #84878c; background: #fff; }
.tree { flex: 1; list-style: none; margin: 0; padding: 2px 0 0; color: #111; overflow: hidden; }
.tree li {
  display: flex; align-items: center; height: 18px; padding-left: 7px; white-space: nowrap;
  background:
    repeating-linear-gradient(#888 0 1px, transparent 1px 2px) 11px 0 / 1px 100% no-repeat,
    repeating-linear-gradient(90deg, #888 0 1px, transparent 1px 2px) 11px 9px / 11px 1px no-repeat;
}
.tree li:last-child {
  background:
    repeating-linear-gradient(#888 0 1px, transparent 1px 2px) 11px 0 / 1px 50% no-repeat,
    repeating-linear-gradient(90deg, #888 0 1px, transparent 1px 2px) 11px 9px / 11px 1px no-repeat;
}
.tree li .ic { margin-right: 3px; }
.tree li.root { padding-left: 3px; background: none; }
.tree li span { padding: 0 2px; }
.tree li .sel { background: #2f8ce8; color: #fff; line-height: 17px; }
.plus { width: 9px; height: 9px; margin-right: 6px; border: 1px solid #9b9b9b; background: linear-gradient(#446, #446) center/5px 1px no-repeat, linear-gradient(#446, #446) center/1px 5px no-repeat, #fff; }
.hscroll { display: flex; height: 17px; background: #f0f0f0; }
.hscroll button { width: 17px; }
.hscroll svg { width: 9px; height: 9px; }
.track { flex: 1; }
.thumb { width: 75%; height: 15px; background: #c9c9c9; }

.btabs { display: flex; height: 22px; flex: none; }
.btab { gap: 4px; padding: 0 6px 1px 5px; }
.btab .ic { width: 14px; height: 14px; }
.btab.on { background: #fff; border: 1px solid #a9a9a9; border-top: 0; padding: 0 4px 1px; }
.catalog .btab { padding: 0 8px 1px 5px; }
.catalog .btab.on { padding: 0 5px 2px; }

.viewport { flex: 1; min-width: 0; background: linear-gradient(#404040, #ebebeb); }
.model { width: 100%; height: 100%; display: block; }
.triad text { font: 9px "Liberation Sans", sans-serif; }

.cbtns { display: flex; gap: 4px; height: 18px; margin: 1px 1px 2px; flex: none; }
.cbtns button { flex: 1; gap: 3px; border: 1px solid #adadad; background: #e5e4e6; color: #111; }
.back { width: 18px; background: #e9e9e9; border: 1px solid #c9c9c9; }
.items { flex: 1; background: #fff; border: 1px solid #84878c; padding: 4px 22px; }
.item { flex-direction: column; width: 32px; gap: 2px; color: #222; }
.item svg { width: 32px; height: 32px; }
.more { margin-left: auto; padding-right: 6px; color: #666; }

.status { display: flex; align-items: center; height: 22px; flex: none; border-top: 1px solid #c9c9c9; padding: 0 5px 0 4px; }
.hint { flex: 1; }
.vsize { width: 138px; }
.units { width: 89px; }
.tools { display: flex; align-self: stretch; }
.tools button { width: 24px; }
.tools .split { width: 35px; gap: 7px; }
.tools .split.tight { width: 33px; gap: 3px; }
.shade { background: #d2d2d2; }
.drop { position: relative; display: block; height: 21px; margin-right: 3px; }
.drop select { appearance: none; width: 100%; height: 100%; border: 1px solid #bcbcbc; border-radius: 0; background: #fff; padding: 0 2px; }
.drop::after { content: ""; position: absolute; right: 4px; top: 9px; border: 3px solid transparent; border-top-color: #555; border-bottom: 0; }
.any { width: 88px; }
.def { width: 64px; }
.org { width: 18px; }
.grip { width: 12px; height: 12px; margin-left: 8px; }
```
